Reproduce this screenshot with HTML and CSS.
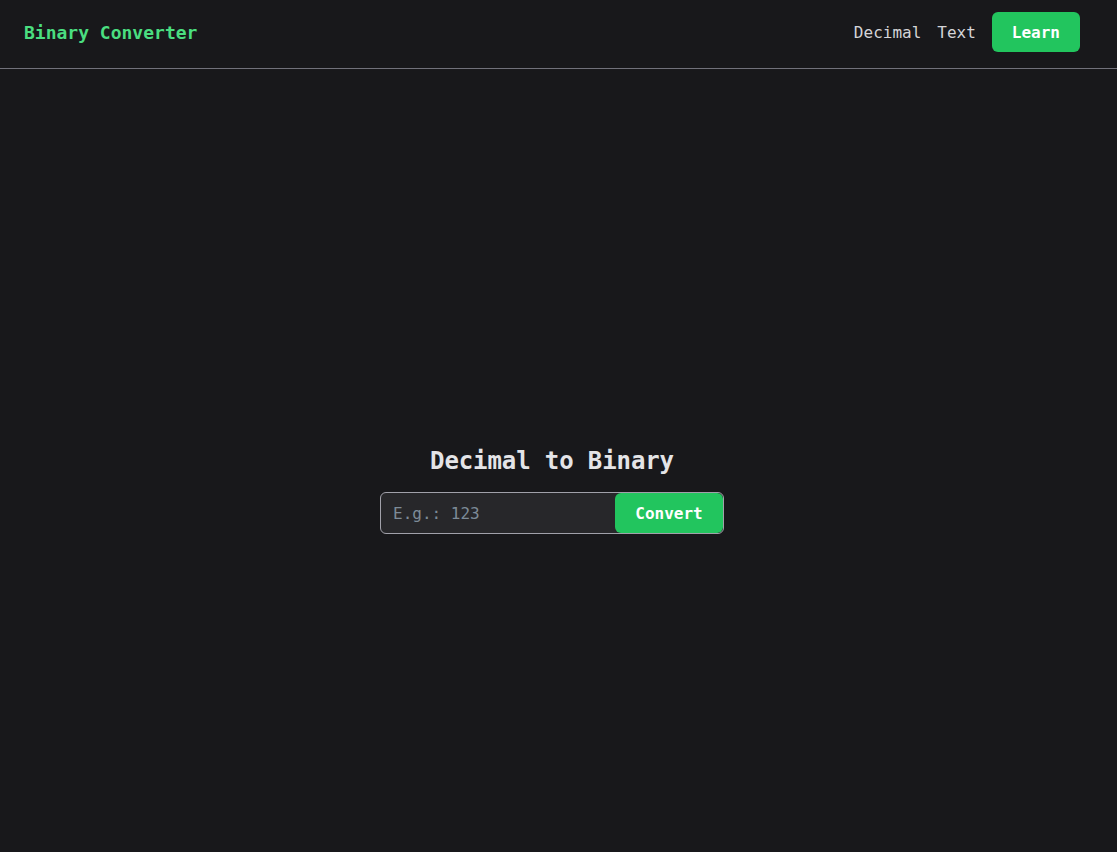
FILE: index.html
```html
<!DOCTYPE html>
<html lang="en">
<head>
<meta charset="utf-8">
<title>Binary Converter</title>
<link rel="stylesheet" href="styles.css">
</head>
<body>
<header class="topbar">
  <a class="brand" href="#">Binary Converter</a>
  <nav class="nav">
    <a class="nav-link" href="#">Decimal</a>
    <a class="nav-link" href="#">Text</a>
    <a class="nav-btn" href="#">Learn</a>
  </nav>
</header>
<main class="main">
  <h1 class="title">Decimal to Binary</h1>
  <form class="convert-form">
    <input class="convert-input" type="text" placeholder="E.g.: 123">
    <button class="convert-btn" type="button">Convert</button>
  </form>
</main>
</body>
</html>
```
FILE: styles.css
```css
* { box-sizing: border-box; }
html, body { margin: 0; padding: 0; }
body {
  background: #18181b;
  color: #e4e4e7;
  font-family: "DejaVu Sans Mono", "Liberation Mono", monospace;
  min-height: 852px;
}
.topbar {
  height: 69px;
  border-bottom: 1px solid #71717a;
  display: flex;
  align-items: center;
  justify-content: space-between;
  padding: 0 37px 4px 24px;
}
.brand {
  color: #4ade80;
  font-weight: bold;
  font-size: 18px;
  text-decoration: none;
}
.nav {
  display: flex;
  align-items: center;
  gap: 16px;
}
.nav-link {
  color: #d4d4d8;
  font-size: 16px;
  text-decoration: none;
}
.nav-btn {
  background: #22c55e;
  color: #fff;
  font-weight: bold;
  font-size: 16px;
  text-decoration: none;
  padding: 9px 20px 7px;
  line-height: 24px;
  border-radius: 6px;
}
.main {
  display: flex;
  flex-direction: column;
  align-items: center;
  padding-top: 376px;
  padding-right: 13px;
}
.title {
  margin: 0 0 15px;
  font-size: 24px;
  line-height: 32px;
  font-weight: bold;
  color: #e4e4e7;
  letter-spacing: -0.1px;
}
.convert-form {
  display: flex;
  width: 344px;
  height: 42px;
  border: 1px solid #a1a1aa;
  border-radius: 6px;
  background: #27272a;
  overflow: hidden;
}
.convert-input {
  flex: 1;
  min-width: 0;
  background: transparent;
  border: none;
  outline: none;
  padding: 0 12px;
  font-family: inherit;
  font-size: 16px;
  color: #e4e4e7;
}
.convert-input::placeholder { color: #7d8b98; }
.convert-btn {
  width: 108px;
  background: #22c55e;
  color: #fff;
  border: none;
  border-radius: 6px;
  font-family: inherit;
  font-weight: bold;
  font-size: 16px;
  cursor: pointer;
}
```
